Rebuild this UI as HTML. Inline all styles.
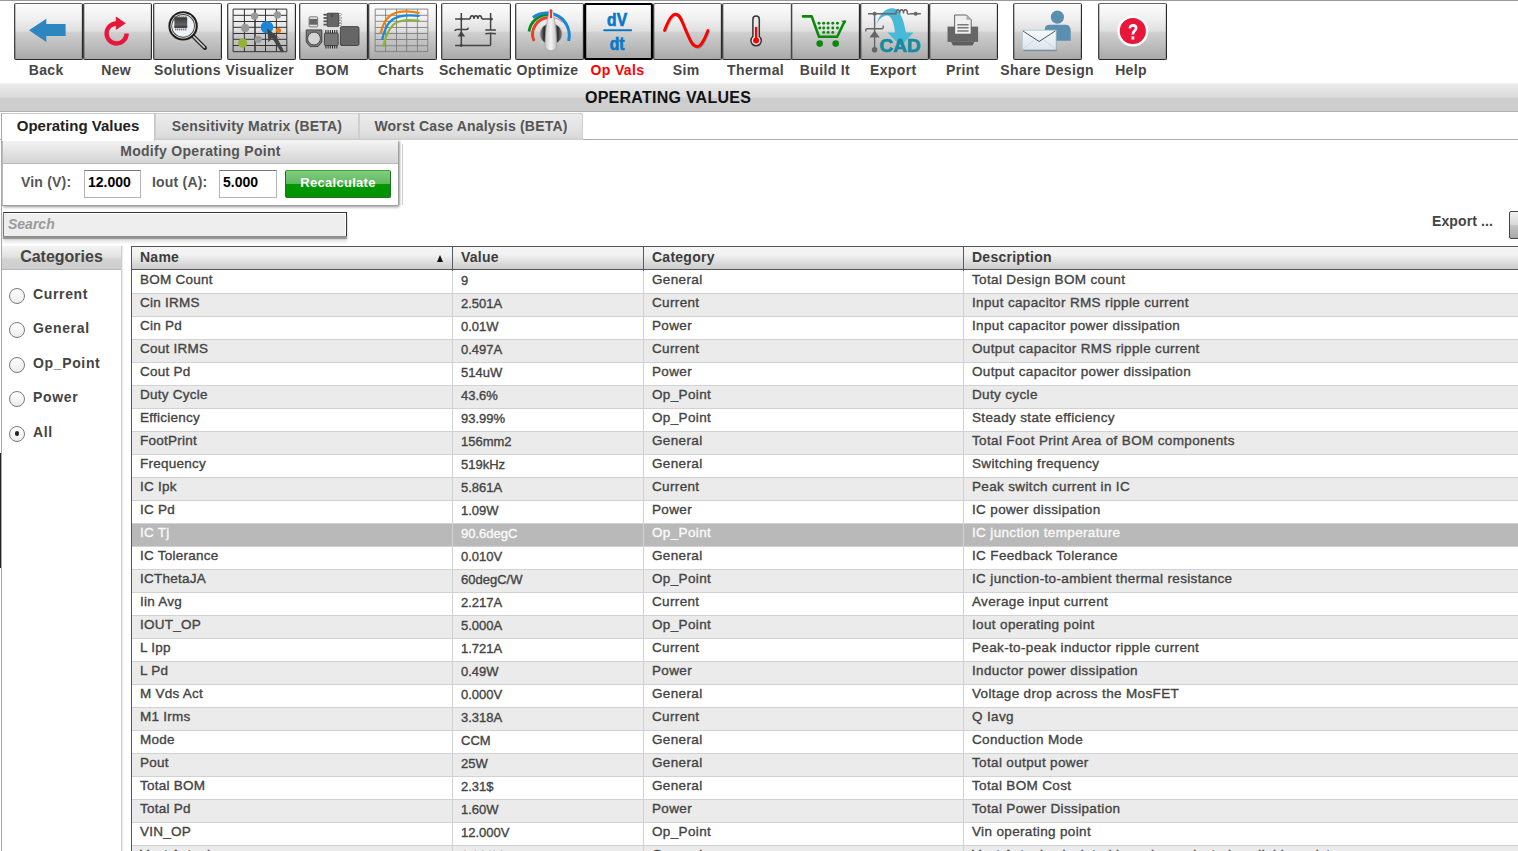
<!DOCTYPE html><html><head><meta charset="utf-8"><style>
*{box-sizing:border-box;margin:0;padding:0}
html,body{width:1518px;height:851px;overflow:hidden;background:#fff;font-family:"Liberation Sans",sans-serif;}
.a{position:absolute}
.topline{left:0;top:0;width:1518px;height:1px;background:#9a9a9a}
.btn{top:3px;height:57px;border:1px solid #2a2a2a;border-top-color:#666;border-left-color:#444;border-radius:2px;
 background:linear-gradient(#fdfdfd 0%,#efefef 28%,#dfdfdf 49%,#cfcfcf 52%,#bdbdbd 76%,#a9a9a9 100%);
 box-shadow:inset 1px 0 0 rgba(0,0,0,.22),inset -1px 0 0 rgba(0,0,0,.12)}
.btn.sel{border:2px solid #000}
.lbl{top:62px;height:18px;font-size:14px;font-weight:bold;color:#474747;text-align:center;white-space:nowrap;letter-spacing:.35px;line-height:16px;text-indent:.35px}
.hdr{left:0;top:83px;width:1518px;height:29px;background:linear-gradient(#f6f6f6 0,#e8e8e8 2px,#dcdcdc 14px,#cecece 15px,#cecece 28px,#b2b2b2 28px)}
.hdrt{left:585px;top:89px;font-size:16px;font-weight:bold;color:#111;letter-spacing:.25px;line-height:18px}
.tabline{left:0;top:139px;width:1518px;height:1px;background:#a9b0b6}
.tab{top:113px;height:27px;border:1px solid #cfcfcf;border-bottom:none;font-size:14px;font-weight:bold;color:#555;letter-spacing:.2px;
 background:linear-gradient(#ececec 0%,#e4e4e4 50%,#dcdcdc 85%,#d0d0d0 100%);line-height:24px;text-align:center}
.tab.act{background:#fff;color:#222;font-size:15px;border-color:#c8c8c8;height:28px;z-index:2;letter-spacing:0}
.panel{left:2px;top:140px;width:396px;height:65px;background:#fff;box-shadow:0 1px 0 #a0a0a0,1px 3px 2px rgba(0,0,0,.2),2px 1px 2px rgba(0,0,0,.3);border-left:1px solid #bbb}
.phdr{left:0;top:0;width:395px;height:24px;background:linear-gradient(#f4f4f4,#d4d4d4);border-bottom:1px solid #b8b8b8;
 text-align:center;font-size:14px;font-weight:bold;color:#555;line-height:23px;letter-spacing:.3px}
.plbl{font-size:14px;font-weight:bold;color:#555;letter-spacing:.2px}
.inp{top:30px;height:28px;border:1px solid #b4b4b4;border-top-color:#7a7a7a;background:#fff;font-size:14px;font-weight:bold;color:#000;line-height:23px;padding-left:3px}
.recalc{left:282px;top:30px;width:106px;height:28px;border:1px solid #1f6f1f;border-top-color:#3aa83a;border-radius:2px;
 background:linear-gradient(#80cd80 0%,#62ba62 48%,#009800 52%,#009300 100%);color:#fff;font-size:13px;font-weight:bold;text-align:center;line-height:23px;letter-spacing:.3px}
.search{left:3px;top:212px;width:344px;height:24px;background:#eeeeee;border:1px solid #333;border-left-color:#777;border-bottom:none;box-shadow:inset -1px 1px 0 #fff,0 1px 0 #8a8a8a,0 3px 1px rgba(0,0,0,.33),0 6px 3px rgba(0,0,0,.12);
 font-size:14px;font-weight:bold;font-style:italic;color:#9a9a9a;line-height:22px;padding-left:4px}
.export{left:1432px;top:213px;font-size:14px;font-weight:bold;color:#444;letter-spacing:.1px}
.expbtn{left:1509px;top:211px;width:20px;height:28px;border:1px solid #444;border-radius:2px;background:linear-gradient(#f2f2f2,#d8d8d8 50%,#c4c4c4 52%,#a8a8a8)}
.leftline{left:1px;top:113px;width:1px;height:738px;background:#a8a8a8;z-index:3}
.blackbar{left:0;top:453px;width:1px;height:115px;background:#222}
.cats{left:2px;top:246px;width:120px;height:620px;background:#fff;border-right:1px solid #cfcfcf;box-shadow:1px 0 1px rgba(0,0,0,.08)}
.chdr{left:0;top:0;width:119px;height:24px;background:linear-gradient(#f4f4f4 0%,#e2e2e2 45%,#d3d3d3 58%,#cecece 100%);border-bottom:1px solid #b4b4b4;font-size:16px;font-weight:bold;color:#444;text-align:center;line-height:22px}
.radio{width:16px;height:16px;border-radius:50%;border:1px solid #7a7a7a;background:linear-gradient(#fff,#ececec)}
.rl{font-size:14px;font-weight:bold;color:#444;letter-spacing:.65px}
.tbl{left:131px;top:246px;width:1400px;height:620px;border-left:1px solid #555;border-top:1px solid #555}
.th{top:0;height:23px;border-bottom:1px solid #555;background:linear-gradient(#f5f5f5 0%,#f2f2f2 35%,#dadada 75%,#cdcdcd 100%);font-size:14px;font-weight:bold;color:#3c3c3c;line-height:21px;padding-left:8px;letter-spacing:.25px}
.thsep{top:0;width:1px;height:24px;background:#5a5a5a}
.row{left:0;height:23px;width:1400px;border-bottom:1px solid #d2d2d2}
.c{top:0;height:22px;font-size:13.5px;font-weight:normal;color:#444;line-height:18.6px;padding-left:8px;white-space:nowrap;letter-spacing:.35px;-webkit-text-stroke:.35px currentColor}
.vsep{top:24px;width:1px;height:620px;background:#d2d2d2}
</style></head><body>
<div class="a topline"></div>
<div class="a btn" style="left:14px;width:69px"></div>
<div class="a lbl" style="left:-14px;width:120px">Back</div>
<div class="a btn" style="left:83px;width:69px"></div>
<div class="a lbl" style="left:56px;width:120px">New</div>
<div class="a btn" style="left:153px;width:69px"></div>
<div class="a lbl" style="left:127.25px;width:120px">Solutions</div>
<div class="a btn" style="left:227px;width:69px"></div>
<div class="a lbl" style="left:199.7px;width:120px">Visualizer</div>
<div class="a btn" style="left:299px;width:69px"></div>
<div class="a lbl" style="left:272px;width:120px">BOM</div>
<div class="a btn" style="left:368px;width:69px"></div>
<div class="a lbl" style="left:340.85px;width:120px">Charts</div>
<div class="a btn" style="left:441px;width:70px"></div>
<div class="a lbl" style="left:415.3px;width:120px">Schematic</div>
<div class="a btn" style="left:515px;width:69px"></div>
<div class="a lbl" style="left:487.4px;width:120px">Optimize</div>
<div class="a btn sel" style="left:584px;width:69px"></div>
<div class="a lbl" style="color:#ff0000;left:557.25px;width:120px">Op Vals</div>
<div class="a btn" style="left:653px;width:69px"></div>
<div class="a lbl" style="left:626px;width:120px">Sim</div>
<div class="a btn" style="left:722px;width:70px"></div>
<div class="a lbl" style="left:695.4px;width:120px">Thermal</div>
<div class="a btn" style="left:791px;width:69px"></div>
<div class="a lbl" style="left:764.8px;width:120px">Build It</div>
<div class="a btn" style="left:860px;width:69px"></div>
<div class="a lbl" style="left:833.1px;width:120px">Export</div>
<div class="a btn" style="left:929px;width:69px"></div>
<div class="a lbl" style="left:902.6px;width:120px">Print</div>
<div class="a btn" style="left:1013px;width:69px"></div>
<div class="a lbl" style="left:987px;width:120px">Share Design</div>
<div class="a btn" style="left:1098px;width:69px"></div>
<div class="a lbl" style="left:1070.85px;width:120px">Help</div>
<svg class="a" style="left:0;top:0" width="1518" height="62" viewBox="0 0 1518 62"><polygon fill="#2e86c1" points="29,30.3 46.3,18.8 46.3,24 65.6,24 65.6,36 46.3,36 46.3,42"/><path d="M126.6,33.5 A10,10 0 1 1 116.3,23.5" fill="none" stroke="#e8173a" stroke-width="4.4"/><polygon fill="#e8173a" points="115.9,16.6 125.8,23.3 115.9,30"/><line x1="192.5" x2="205" y1="35.5" y2="48" stroke="#2a2a2a" stroke-width="4" stroke-linecap="round"/><line x1="193" x2="204.3" y1="36" y2="47.3" stroke="#d8d8d8" stroke-width="1.5" stroke-linecap="round"/><circle cx="183.1" cy="25.9" r="14.7" fill="#1e1e1e"/><circle cx="183.1" cy="25.9" r="12.6" fill="#fff"/><circle cx="183.1" cy="25.9" r="11.8" fill="#3a3a3a"/><circle cx="183.1" cy="25.9" r="10.9" fill="#eef3f8"/><defs><linearGradient id="chip" x1="0" y1="0" x2="0" y2="1"><stop offset="0" stop-color="#333"/><stop offset="1" stop-color="#777"/></linearGradient></defs><rect x="174.4" y="17.2" width="12.8" height="10.8" fill="url(#chip)"/><rect x="174.4" y="25.5" width="12.8" height="2.4" fill="#444"/><rect x="175.3" y="28.4" width="1" height="2" fill="#555"/><rect x="175.3" y="15.6" width="1" height="1.6" fill="#777"/><rect x="177.3" y="28.4" width="1" height="2" fill="#555"/><rect x="177.3" y="15.6" width="1" height="1.6" fill="#777"/><rect x="179.3" y="28.4" width="1" height="2" fill="#555"/><rect x="179.3" y="15.6" width="1" height="1.6" fill="#777"/><rect x="181.3" y="28.4" width="1" height="2" fill="#555"/><rect x="181.3" y="15.6" width="1" height="1.6" fill="#777"/><rect x="183.3" y="28.4" width="1" height="2" fill="#555"/><rect x="183.3" y="15.6" width="1" height="1.6" fill="#777"/><rect x="185.3" y="28.4" width="1" height="2" fill="#555"/><rect x="185.3" y="15.6" width="1" height="1.6" fill="#777"/><line x1="233.1" x2="233.1" y1="9.1" y2="51.7" stroke="#333" stroke-width="1.0"/><line x1="244.4" x2="244.4" y1="9.1" y2="51.7" stroke="#333" stroke-width="1.0"/><line x1="255" x2="255" y1="9.1" y2="51.7" stroke="#333" stroke-width="1.5"/><line x1="265.5" x2="265.5" y1="9.1" y2="51.7" stroke="#333" stroke-width="1.0"/><line x1="276.4" x2="276.4" y1="9.1" y2="51.7" stroke="#333" stroke-width="1.0"/><line x1="286.8" x2="286.8" y1="9.1" y2="51.7" stroke="#333" stroke-width="1.0"/><line x1="233.1" x2="286.8" y1="9.1" y2="9.1" stroke="#333" stroke-width="1.0"/><line x1="233.1" x2="286.8" y1="15.3" y2="15.3" stroke="#333" stroke-width="1.0"/><line x1="233.1" x2="286.8" y1="21.5" y2="21.5" stroke="#333" stroke-width="1.0"/><line x1="233.1" x2="286.8" y1="27.3" y2="27.3" stroke="#333" stroke-width="1.0"/><line x1="233.1" x2="286.8" y1="33.5" y2="33.5" stroke="#333" stroke-width="1.0"/><line x1="233.1" x2="286.8" y1="39.3" y2="39.3" stroke="#333" stroke-width="1.0"/><line x1="233.1" x2="286.8" y1="45.5" y2="45.5" stroke="#333" stroke-width="1.0"/><line x1="233.1" x2="286.8" y1="51.7" y2="51.7" stroke="#333" stroke-width="1.0"/><rect x="233.6" y="9.6" width="52.7" height="41.6" fill="none"/><circle cx="254.6" cy="16.2" r="3.6" fill="#999"/><circle cx="277.5" cy="14.9" r="3.6" fill="#999"/><circle cx="245.1" cy="28" r="4.3" fill="#999"/><circle cx="258.2" cy="39.3" r="3.6" fill="#999"/><circle cx="267" cy="27.3" r="6.3" fill="#1a87d8"/><circle cx="278.5" cy="30.6" r="2.6" fill="#e8720c"/><circle cx="242.6" cy="43.1" r="4.7" fill="#93b23a"/><polygon fill="#444" points="267.3,28.4 268.4,42.2 272,37.9 281.3,52.6 283.9,51 276.5,36.6 281,39.3"/><rect x="309.1" y="16.8" width="8.6" height="10.1" rx="1" fill="#ddd" stroke="#666" stroke-width=".8"/><rect x="309.3" y="19" width="8.2" height="5.7" fill="#666"/><rect x="327" y="13.1" width="12" height="13.5" rx="1" fill="#666" stroke="#333" stroke-width=".6"/><rect x="323.5" y="13.8" width="3.5" height="1.8" fill="#555"/><rect x="339" y="13.8" width="2.8" height="1.8" fill="#fff" stroke="#444" stroke-width=".4"/><rect x="323.5" y="17.1" width="3.5" height="1.8" fill="#555"/><rect x="339" y="17.1" width="2.8" height="1.8" fill="#fff" stroke="#444" stroke-width=".4"/><rect x="323.5" y="20.4" width="3.5" height="1.8" fill="#555"/><rect x="339" y="20.4" width="2.8" height="1.8" fill="#fff" stroke="#444" stroke-width=".4"/><rect x="323.5" y="23.7" width="3.5" height="1.8" fill="#555"/><rect x="339" y="23.7" width="2.8" height="1.8" fill="#fff" stroke="#444" stroke-width=".4"/><circle cx="332.2" cy="15.6" r="1" fill="none" stroke="#333" stroke-width=".6"/><path d="M306.2,29.9 H321.9 V42 L318,46.6 H310 L306.2,42 Z" fill="#777" stroke="#333" stroke-width=".8"/><circle cx="314" cy="38.5" r="6.4" fill="#d4d4d4" stroke="#333" stroke-width=".8"/><rect x="324.4" y="33.1" width="13.8" height="12.4" rx="1" fill="#777" stroke="#333" stroke-width=".8"/><rect x="325.4" y="30" width="1" height="3" fill="#222"/><rect x="325.4" y="45.5" width="1" height="3" fill="#222"/><rect x="327.59999999999997" y="30" width="1" height="3" fill="#222"/><rect x="327.59999999999997" y="45.5" width="1" height="3" fill="#222"/><rect x="329.79999999999995" y="30" width="1" height="3" fill="#222"/><rect x="329.79999999999995" y="45.5" width="1" height="3" fill="#222"/><rect x="332.0" y="30" width="1" height="3" fill="#222"/><rect x="332.0" y="45.5" width="1" height="3" fill="#222"/><rect x="334.2" y="30" width="1" height="3" fill="#222"/><rect x="334.2" y="45.5" width="1" height="3" fill="#222"/><rect x="336.4" y="30" width="1" height="3" fill="#222"/><rect x="336.4" y="45.5" width="1" height="3" fill="#222"/><rect x="340.4" y="26.6" width="18.6" height="18.9" rx="1.5" fill="#666" stroke="#333" stroke-width=".8"/><line x1="375.2" x2="375.2" y1="9.1" y2="51.6" stroke="#7a7a7a" stroke-width=".85"/><line x1="385.6" x2="385.6" y1="9.1" y2="51.6" stroke="#7a7a7a" stroke-width=".85"/><line x1="396.5" x2="396.5" y1="9.1" y2="51.6" stroke="#7a7a7a" stroke-width=".85"/><line x1="406.7" x2="406.7" y1="9.1" y2="51.6" stroke="#7a7a7a" stroke-width=".85"/><line x1="417.4" x2="417.4" y1="9.1" y2="51.6" stroke="#7a7a7a" stroke-width=".85"/><line x1="427.8" x2="427.8" y1="9.1" y2="51.6" stroke="#7a7a7a" stroke-width=".85"/><line x1="375.2" x2="427.8" y1="9.1" y2="9.1" stroke="#7a7a7a" stroke-width=".85"/><line x1="375.2" x2="427.8" y1="15.3" y2="15.3" stroke="#7a7a7a" stroke-width=".85"/><line x1="375.2" x2="427.8" y1="21.3" y2="21.3" stroke="#7a7a7a" stroke-width=".85"/><line x1="375.2" x2="427.8" y1="27.5" y2="27.5" stroke="#7a7a7a" stroke-width=".85"/><line x1="375.2" x2="427.8" y1="33.5" y2="33.5" stroke="#7a7a7a" stroke-width=".85"/><line x1="375.2" x2="427.8" y1="39.5" y2="39.5" stroke="#7a7a7a" stroke-width=".85"/><line x1="375.2" x2="427.8" y1="45.7" y2="45.7" stroke="#7a7a7a" stroke-width=".85"/><line x1="375.2" x2="427.8" y1="51.6" y2="51.6" stroke="#7a7a7a" stroke-width=".85"/><path d="M380.7,33.5 C382.5,25 385.5,18.5 391.5,14.8 C398,11 409,10.8 419.6,13" fill="none" stroke="#e8820c" stroke-width="2.2"/><path d="M382.1,39.7 C384,31 387,23.5 392.5,19.5 C398.5,15.5 409,14.8 419.6,16" fill="none" stroke="#1a8ad8" stroke-width="2.2"/><path d="M383.2,47 C385,38 388,30 393.5,24.5 C399,20 409,19.3 419.6,20.8" fill="none" stroke="#8db33a" stroke-width="2.2"/><g stroke="#444" stroke-width="1.5" fill="none"><path d="M455.1,19.1 H470.2 M481.7,19.1 H491.5"/><path d="M470.2,19.1 C470.2,14.5 474,14.5 474,19.1 C474,14.5 477.9,14.5 477.9,19.1 C477.9,14.5 481.7,14.5 481.7,19.1"/><path d="M461.3,13.1 V45.5 M490.6,13.1 V29.9 M490.6,33.5 V45.5 M455.1,45.5 H490.6"/><path d="M485.3,29.9 H495.9 M485.3,33.8 Q490.6,32.6 495.9,33.8"/><path d="M455.2,31.2 Q454.8,29.5 457,29.5 H466.5 Q468.6,29.5 467.8,27.6"/></g><polygon fill="#444" points="461.3,31 457.6,36.6 465.1,36.6"/><circle cx="461.3" cy="19.1" r="1.4" fill="#444"/><circle cx="491.5" cy="19.1" r="1.4" fill="#444"/><circle cx="461.3" cy="45.5" r="1.4" fill="#444"/><path d="M534,41 A16.8,16.8 0 0 1 549.5,17.5" fill="none" stroke="#e8412a" stroke-width="3"/><path d="M550.2,17.4 A16.8,16.8 0 0 1 562.5,22.5" fill="none" stroke="#e8412a" stroke-width=".7"/><path d="M529,31.5 A19.5,19.5 0 0 1 550,14.8" fill="none" stroke="#0a8a1a" stroke-width="2.8"/><path d="M550,14.8 A19.5,19.5 0 0 1 564.5,21" fill="none" stroke="#0a8a1a" stroke-width=".8"/><path d="M533,17.5 A22.6,22.6 0 0 1 568.6,41" fill="none" stroke="#1a86d8" stroke-width="3"/><defs><radialGradient id="kn" cx=".5" cy=".5" r=".5"><stop offset="0" stop-color="#eee"/><stop offset=".55" stop-color="#222"/><stop offset=".8" stop-color="#666"/><stop offset="1" stop-color="#bbb"/></radialGradient><linearGradient id="pt" x1="0" x2="1"><stop offset="0" stop-color="#ccc"/><stop offset=".5" stop-color="#f4f4f4"/><stop offset="1" stop-color="#bdbdbd"/></linearGradient></defs><defs><linearGradient id="kn2" x1="0" x2="1"><stop offset="0" stop-color="#9a9a9a"/><stop offset=".2" stop-color="#262626"/><stop offset=".42" stop-color="#cfcfcf"/><stop offset=".58" stop-color="#cfcfcf"/><stop offset=".8" stop-color="#2e2e2e"/><stop offset="1" stop-color="#8a8a8a"/></linearGradient></defs><ellipse cx="551" cy="34" rx="11.2" ry="10.6" fill="url(#kn2)" stroke="#bdbdbd" stroke-width=".6"/><path d="M538.5,28 L541.5,29.5 M563.5,28 L560.5,29.5 M540.5,43.5 L542.5,41.8 M561.5,43.5 L559.5,41.8" stroke="#d8d8d8" stroke-width="1"/><path d="M549.3,10.2 Q551,9 552.7,10.2 L554.3,19 Q556,26 556.8,44 Q557,50.5 550.9,50.8 Q544.8,50.5 545,44 Q545.8,26 547.5,19 Z" fill="url(#pt)" stroke="#9d9d9d" stroke-width=".7"/><rect x="550.1" y="9.6" width="1.8" height="8.6" fill="#e82020"/><g fill="#0a78c8" stroke="#0a78c8" stroke-width=".7" font-family="Liberation Sans" font-weight="bold"><text x="617.1" y="25.7" font-size="18.6" text-anchor="middle" transform="translate(617.1,0) scale(.84,1) translate(-617.1,0)">dV</text><text x="617.1" y="50.1" font-size="18.6" text-anchor="middle" transform="translate(617.1,0) scale(.84,1) translate(-617.1,0)">dt</text></g><line x1="604.3" x2="631.1" y1="30.2" y2="30.2" stroke="#0a78c8" stroke-width="2.1" stroke-linecap="round"/><path d="M664.5,30.5 C668,21 671.5,14.2 675.5,14.2 C681,14.2 683,25 686.5,32 C690,40 692.5,46.6 697.3,46.6 C701.5,46.6 705,38 708,30.5" fill="none" stroke="#333" stroke-opacity=".35" stroke-width="3.2" transform="translate(.6,.6)"/><path d="M664.5,30.5 C668,21 671.5,14.2 675.5,14.2 C681,14.2 683,25 686.5,32 C690,40 692.5,46.6 697.3,46.6 C701.5,46.6 705,38 708,30.5" fill="none" stroke="#ff0000" stroke-width="2.9" stroke-linecap="round"/><path d="M752.9,36.5 V19.3 A3.2,3.2 0 0 1 759.3,19.3 V36.5 A5.2,5.2 0 1 1 752.9,36.5 Z" fill="#e9e9e9" stroke="#333" stroke-width="1.5"/><rect x="754.9" y="26.9" width="2.4" height="12" fill="#f00"/><circle cx="756.1" cy="40.4" r="3" fill="#f00"/><path d="M803,16.4 H811.7 L819,36.8 H837.2 L844.5,21.5" fill="none" stroke="#078a07" stroke-width="2.6" stroke-linecap="round" stroke-linejoin="round"/><polygon fill="#078a07" points="841,20.8 846.3,20.8 845,24"/><circle cx="819" cy="23.3" r="1.45" fill="#078a07"/><circle cx="823.7" cy="23.3" r="1.45" fill="#078a07"/><circle cx="828.1" cy="23.3" r="1.45" fill="#078a07"/><circle cx="832.8" cy="23.3" r="1.45" fill="#078a07"/><circle cx="837.5" cy="23.3" r="1.45" fill="#078a07"/><circle cx="819.8" cy="28" r="1.45" fill="#078a07"/><circle cx="823.7" cy="28" r="1.45" fill="#078a07"/><circle cx="828.1" cy="28" r="1.45" fill="#078a07"/><circle cx="832.8" cy="28" r="1.45" fill="#078a07"/><circle cx="837.5" cy="28" r="1.45" fill="#078a07"/><circle cx="823.7" cy="32.4" r="1.45" fill="#078a07"/><circle cx="828.1" cy="32.4" r="1.45" fill="#078a07"/><circle cx="832.8" cy="32.4" r="1.45" fill="#078a07"/><circle cx="819.7" cy="43.6" r="3.3" fill="#078a07"/><circle cx="835.7" cy="43.6" r="3.3" fill="#078a07"/><path d="M876.5,24.8 C879,14 886,8.3 892,8.3 C898,8.3 901,14 903.5,22 L906,32.4 H913.5 L901,46 L887.5,32.4 H895 C894,22 891,15.5 887,15.5 C882,15.8 878.5,20 876.5,24.8 Z" fill="#48b9d6"/><g stroke="#666" stroke-width="1.4" fill="none"><path d="M868,13.8 H896 C896,8.5 899.7,8.5 899.7,13.5 C899.7,8.5 903.5,8.5 903.5,13.5 C903.5,8.5 907.4,8.5 907.4,13.5 C907.6,14.5 909.5,14 911,13.8 H920.8"/><path d="M874.6,13.8 V50.3"/><path d="M866,31.5 Q865,28.8 867.5,28.8 H881.5 Q884,28.8 883,25.5"/></g><polygon fill="#666" points="874.6,30.6 869.5,37.5 879.7,37.5"/><circle cx="874.6" cy="13.8" r="2" fill="#666"/><circle cx="915.7" cy="13.8" r="2" fill="#666"/><circle cx="874.6" cy="49.8" r="2.8" fill="#666"/><text x="879.6" y="52.2" font-family="Liberation Sans" font-weight="bold" font-size="17.8" fill="#168aa3" stroke="#168aa3" stroke-width=".7" textLength="41" lengthAdjust="spacingAndGlyphs">CAD</text><rect x="947.5" y="26.6" width="30.6" height="15.3" fill="#666"/><polygon fill="#5e5e5e" points="951.1,41.9 974.4,41.9 972.5,45.6 953,45.6"/><path d="M954.6,15 H966.5 L971.2,19.8 V34.2 H954.6 Z" fill="#f0f0f0" stroke="#555" stroke-width=".9"/><path d="M966.5,15 V19.8 H971.2 Z" fill="#aaa"/><line x1="957.3" x2="968.6" y1="24.8" y2="24.8" stroke="#666" stroke-width="1.3"/><line x1="957.3" x2="968.6" y1="27.8" y2="27.8" stroke="#666" stroke-width="1.3"/><line x1="957.3" x2="968.6" y1="31" y2="31" stroke="#666" stroke-width="1.3"/><circle cx="1057.4" cy="17.1" r="6.6" fill="#5b8fb0"/><path d="M1044.8,40.8 V29 Q1045,24.8 1050,24.8 H1066 Q1070.7,25 1070.7,31 V40.8 Z" fill="#5b8fb0"/><rect x="1023.2" y="31.2" width="33.5" height="20" fill="#4a5a66" opacity=".55"/><defs><linearGradient id="env" x1="0" y1="0" x2="0" y2="1"><stop offset="0" stop-color="#f6fafc"/><stop offset="1" stop-color="#dbe6ee"/></linearGradient></defs><rect x="1022.2" y="30.2" width="33.9" height="19.6" fill="url(#env)" stroke="#a8c4d4" stroke-width=".8"/><path d="M1023,31 L1039.1,41.5 L1055.3,31" fill="none" stroke="#555" stroke-width="1"/><path d="M1023,49 L1034,40 M1055.3,49 L1044,40" fill="none" stroke="#b8d0dc" stroke-width=".7"/><circle cx="1132.8" cy="31" r="15.5" fill="#fff"/><circle cx="1132.8" cy="31" r="13.1" fill="#e8173a"/><path d="M1130,28.4 Q1129.9,25.3 1133,25.3 Q1136.1,25.3 1136.1,28 Q1136.1,29.9 1134.3,31.1 Q1132.9,32.1 1132.9,34.6" fill="none" stroke="#fff" stroke-width="2.7"/><rect x="1131.5" y="36.4" width="2.8" height="3.1" fill="#fff"/></svg>
<div class="a hdr"></div><div class="a hdrt">OPERATING VALUES</div>
<div class="a tabline"></div>
<div class="a tab act" style="left:1px;width:154px">Operating Values</div>
<div class="a tab" style="left:155px;width:204px">Sensitivity Matrix (BETA)</div>
<div class="a tab" style="left:359px;width:224px">Worst Case Analysis (BETA)</div>
<div class="a leftline"></div><div class="a blackbar"></div>
<div class="a panel"><div class="a phdr">Modify Operating Point</div><div class="a plbl" style="left:18px;top:34px">Vin (V):</div><div class="a inp" style="left:81px;width:57px">12.000</div><div class="a plbl" style="left:149px;top:34px">Iout (A):</div><div class="a inp" style="left:216px;width:58px">5.000</div><div class="a recalc">Recalculate</div></div>
<div class="a" style="left:402px;top:144px;width:1px;height:61px;background:#cfcfcf"></div>
<div class="a search">Search</div>
<div class="a export">Export ...</div><div class="a expbtn"></div>
<div class="a cats"><div class="a chdr">Categories</div><div class="a radio" style="left:7px;top:41.7px"></div><div class="a rl" style="left:31px;top:39.7px">Current</div><div class="a radio" style="left:7px;top:76.2px"></div><div class="a rl" style="left:31px;top:74.2px">General</div><div class="a radio" style="left:7px;top:110.7px"></div><div class="a rl" style="left:31px;top:108.7px">Op_Point</div><div class="a radio" style="left:7px;top:145.2px"></div><div class="a rl" style="left:31px;top:143.2px">Power</div><div class="a radio" style="left:7px;top:179.7px"></div><div class="a" style="left:12.7px;top:185.4px;width:4.6px;height:4.6px;border-radius:50%;background:#1e2430"></div><div class="a rl" style="left:31px;top:177.7px">All</div></div>
<div class="a tbl"><div class="a th" style="left:0px;width:321px">Name</div><div class="a th" style="left:321px;width:191px">Value</div><div class="a thsep" style="left:320px"></div><div class="a vsep" style="left:320px"></div><div class="a th" style="left:512px;width:320px">Category</div><div class="a thsep" style="left:511px"></div><div class="a vsep" style="left:511px"></div><div class="a th" style="left:832px;width:605px">Description</div><div class="a thsep" style="left:831px"></div><div class="a vsep" style="left:831px"></div><div class="a" style="left:305px;top:8px;width:0;height:0;border-left:3.5px solid transparent;border-right:3.5px solid transparent;border-bottom:7px solid #111"></div><div class="a row" style="top:24px;background:#fff"><div class="a c" style="left:0px;color:#444;letter-spacing:.25px;">BOM Count</div><div class="a c" style="left:321px;color:#444;font-size:13px;letter-spacing:0;line-height:19.5px;">9</div><div class="a c" style="left:512px;color:#444;">General</div><div class="a c" style="left:832px;color:#444;">Total Design BOM count</div></div><div class="a row" style="top:47px;background:#ebebeb"><div class="a c" style="left:0px;color:#444;letter-spacing:.25px;">Cin IRMS</div><div class="a c" style="left:321px;color:#444;font-size:13px;letter-spacing:0;line-height:19.5px;">2.501A</div><div class="a c" style="left:512px;color:#444;">Current</div><div class="a c" style="left:832px;color:#444;">Input capacitor RMS ripple current</div></div><div class="a row" style="top:70px;background:#fff"><div class="a c" style="left:0px;color:#444;letter-spacing:.25px;">Cin Pd</div><div class="a c" style="left:321px;color:#444;font-size:13px;letter-spacing:0;line-height:19.5px;">0.01W</div><div class="a c" style="left:512px;color:#444;">Power</div><div class="a c" style="left:832px;color:#444;">Input capacitor power dissipation</div></div><div class="a row" style="top:93px;background:#ebebeb"><div class="a c" style="left:0px;color:#444;letter-spacing:.25px;">Cout IRMS</div><div class="a c" style="left:321px;color:#444;font-size:13px;letter-spacing:0;line-height:19.5px;">0.497A</div><div class="a c" style="left:512px;color:#444;">Current</div><div class="a c" style="left:832px;color:#444;">Output capacitor RMS ripple current</div></div><div class="a row" style="top:116px;background:#fff"><div class="a c" style="left:0px;color:#444;letter-spacing:.25px;">Cout Pd</div><div class="a c" style="left:321px;color:#444;font-size:13px;letter-spacing:0;line-height:19.5px;">514uW</div><div class="a c" style="left:512px;color:#444;">Power</div><div class="a c" style="left:832px;color:#444;">Output capacitor power dissipation</div></div><div class="a row" style="top:139px;background:#ebebeb"><div class="a c" style="left:0px;color:#444;letter-spacing:.25px;">Duty Cycle</div><div class="a c" style="left:321px;color:#444;font-size:13px;letter-spacing:0;line-height:19.5px;">43.6%</div><div class="a c" style="left:512px;color:#444;">Op_Point</div><div class="a c" style="left:832px;color:#444;">Duty cycle</div></div><div class="a row" style="top:162px;background:#fff"><div class="a c" style="left:0px;color:#444;letter-spacing:.25px;">Efficiency</div><div class="a c" style="left:321px;color:#444;font-size:13px;letter-spacing:0;line-height:19.5px;">93.99%</div><div class="a c" style="left:512px;color:#444;">Op_Point</div><div class="a c" style="left:832px;color:#444;">Steady state efficiency</div></div><div class="a row" style="top:185px;background:#ebebeb"><div class="a c" style="left:0px;color:#444;letter-spacing:.25px;">FootPrint</div><div class="a c" style="left:321px;color:#444;font-size:13px;letter-spacing:0;line-height:19.5px;">156mm2</div><div class="a c" style="left:512px;color:#444;">General</div><div class="a c" style="left:832px;color:#444;">Total Foot Print Area of BOM components</div></div><div class="a row" style="top:208px;background:#fff"><div class="a c" style="left:0px;color:#444;letter-spacing:.25px;">Frequency</div><div class="a c" style="left:321px;color:#444;font-size:13px;letter-spacing:0;line-height:19.5px;">519kHz</div><div class="a c" style="left:512px;color:#444;">General</div><div class="a c" style="left:832px;color:#444;">Switching frequency</div></div><div class="a row" style="top:231px;background:#ebebeb"><div class="a c" style="left:0px;color:#444;letter-spacing:.25px;">IC Ipk</div><div class="a c" style="left:321px;color:#444;font-size:13px;letter-spacing:0;line-height:19.5px;">5.861A</div><div class="a c" style="left:512px;color:#444;">Current</div><div class="a c" style="left:832px;color:#444;">Peak switch current in IC</div></div><div class="a row" style="top:254px;background:#fff"><div class="a c" style="left:0px;color:#444;letter-spacing:.25px;">IC Pd</div><div class="a c" style="left:321px;color:#444;font-size:13px;letter-spacing:0;line-height:19.5px;">1.09W</div><div class="a c" style="left:512px;color:#444;">Power</div><div class="a c" style="left:832px;color:#444;">IC power dissipation</div></div><div class="a row" style="top:277px;background:#b9b9b9"><div class="a c" style="left:0px;color:#fafafa;letter-spacing:.25px;">IC Tj</div><div class="a c" style="left:321px;color:#fafafa;font-size:13px;letter-spacing:0;line-height:19.5px;">90.6degC</div><div class="a c" style="left:512px;color:#fafafa;">Op_Point</div><div class="a c" style="left:832px;color:#fafafa;">IC junction temperature</div></div><div class="a row" style="top:300px;background:#fff"><div class="a c" style="left:0px;color:#444;letter-spacing:.25px;">IC Tolerance</div><div class="a c" style="left:321px;color:#444;font-size:13px;letter-spacing:0;line-height:19.5px;">0.010V</div><div class="a c" style="left:512px;color:#444;">General</div><div class="a c" style="left:832px;color:#444;">IC Feedback Tolerance</div></div><div class="a row" style="top:323px;background:#ebebeb"><div class="a c" style="left:0px;color:#444;letter-spacing:.25px;">ICThetaJA</div><div class="a c" style="left:321px;color:#444;font-size:13px;letter-spacing:0;line-height:19.5px;">60degC/W</div><div class="a c" style="left:512px;color:#444;">Op_Point</div><div class="a c" style="left:832px;color:#444;">IC junction-to-ambient thermal resistance</div></div><div class="a row" style="top:346px;background:#fff"><div class="a c" style="left:0px;color:#444;letter-spacing:.25px;">Iin Avg</div><div class="a c" style="left:321px;color:#444;font-size:13px;letter-spacing:0;line-height:19.5px;">2.217A</div><div class="a c" style="left:512px;color:#444;">Current</div><div class="a c" style="left:832px;color:#444;">Average input current</div></div><div class="a row" style="top:369px;background:#ebebeb"><div class="a c" style="left:0px;color:#444;letter-spacing:.25px;">IOUT_OP</div><div class="a c" style="left:321px;color:#444;font-size:13px;letter-spacing:0;line-height:19.5px;">5.000A</div><div class="a c" style="left:512px;color:#444;">Op_Point</div><div class="a c" style="left:832px;color:#444;">Iout operating point</div></div><div class="a row" style="top:392px;background:#fff"><div class="a c" style="left:0px;color:#444;letter-spacing:.25px;">L Ipp</div><div class="a c" style="left:321px;color:#444;font-size:13px;letter-spacing:0;line-height:19.5px;">1.721A</div><div class="a c" style="left:512px;color:#444;">Current</div><div class="a c" style="left:832px;color:#444;">Peak-to-peak inductor ripple current</div></div><div class="a row" style="top:415px;background:#ebebeb"><div class="a c" style="left:0px;color:#444;letter-spacing:.25px;">L Pd</div><div class="a c" style="left:321px;color:#444;font-size:13px;letter-spacing:0;line-height:19.5px;">0.49W</div><div class="a c" style="left:512px;color:#444;">Power</div><div class="a c" style="left:832px;color:#444;">Inductor power dissipation</div></div><div class="a row" style="top:438px;background:#fff"><div class="a c" style="left:0px;color:#444;letter-spacing:.25px;">M Vds Act</div><div class="a c" style="left:321px;color:#444;font-size:13px;letter-spacing:0;line-height:19.5px;">0.000V</div><div class="a c" style="left:512px;color:#444;">General</div><div class="a c" style="left:832px;color:#444;">Voltage drop across the MosFET</div></div><div class="a row" style="top:461px;background:#ebebeb"><div class="a c" style="left:0px;color:#444;letter-spacing:.25px;">M1 Irms</div><div class="a c" style="left:321px;color:#444;font-size:13px;letter-spacing:0;line-height:19.5px;">3.318A</div><div class="a c" style="left:512px;color:#444;">Current</div><div class="a c" style="left:832px;color:#444;">Q Iavg</div></div><div class="a row" style="top:484px;background:#fff"><div class="a c" style="left:0px;color:#444;letter-spacing:.25px;">Mode</div><div class="a c" style="left:321px;color:#444;font-size:13px;letter-spacing:0;line-height:19.5px;">CCM</div><div class="a c" style="left:512px;color:#444;">General</div><div class="a c" style="left:832px;color:#444;">Conduction Mode</div></div><div class="a row" style="top:507px;background:#ebebeb"><div class="a c" style="left:0px;color:#444;letter-spacing:.25px;">Pout</div><div class="a c" style="left:321px;color:#444;font-size:13px;letter-spacing:0;line-height:19.5px;">25W</div><div class="a c" style="left:512px;color:#444;">General</div><div class="a c" style="left:832px;color:#444;">Total output power</div></div><div class="a row" style="top:530px;background:#fff"><div class="a c" style="left:0px;color:#444;letter-spacing:.25px;">Total BOM</div><div class="a c" style="left:321px;color:#444;font-size:13px;letter-spacing:0;line-height:19.5px;">2.31$</div><div class="a c" style="left:512px;color:#444;">General</div><div class="a c" style="left:832px;color:#444;">Total BOM Cost</div></div><div class="a row" style="top:553px;background:#ebebeb"><div class="a c" style="left:0px;color:#444;letter-spacing:.25px;">Total Pd</div><div class="a c" style="left:321px;color:#444;font-size:13px;letter-spacing:0;line-height:19.5px;">1.60W</div><div class="a c" style="left:512px;color:#444;">Power</div><div class="a c" style="left:832px;color:#444;">Total Power Dissipation</div></div><div class="a row" style="top:576px;background:#fff"><div class="a c" style="left:0px;color:#444;letter-spacing:.25px;">VIN_OP</div><div class="a c" style="left:321px;color:#444;font-size:13px;letter-spacing:0;line-height:19.5px;">12.000V</div><div class="a c" style="left:512px;color:#444;">Op_Point</div><div class="a c" style="left:832px;color:#444;">Vin operating point</div></div><div class="a row" style="top:599px;background:#ebebeb"><div class="a c" style="left:0px;color:#444;letter-spacing:.25px;">Vout Actual</div><div class="a c" style="left:321px;color:#444;font-size:13px;letter-spacing:0;line-height:19.5px;">1.803V</div><div class="a c" style="left:512px;color:#444;">General</div><div class="a c" style="left:832px;color:#444;">Vout Actual calculated based on selected available resistors</div></div><div class="a vsep" style="left:320px"></div><div class="a vsep" style="left:511px"></div><div class="a vsep" style="left:831px"></div></div>
</body></html>
